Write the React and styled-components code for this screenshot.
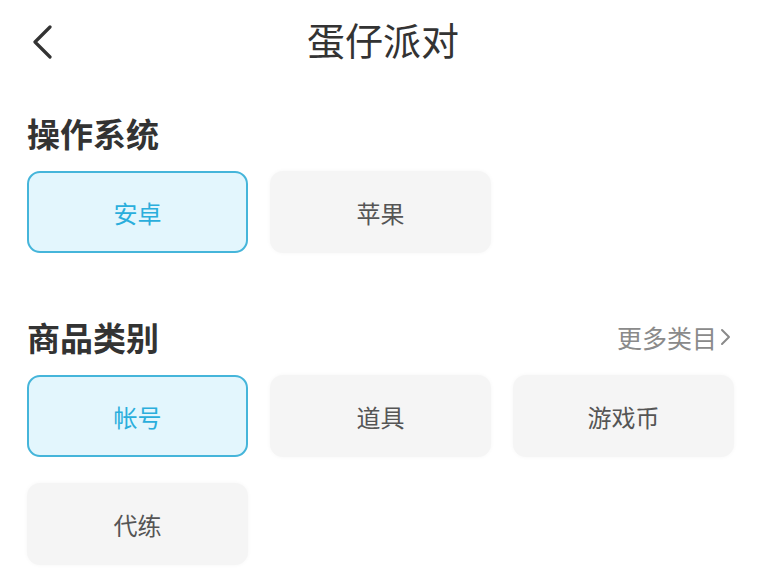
import React, { useState } from "react";
import styled, { createGlobalStyle } from "styled-components";

const Global = createGlobalStyle`
  html, body { margin: 0; padding: 0; background: #fff; }
  body { font-family: "Noto Sans CJK SC", "Noto Sans", sans-serif; }
  * { box-sizing: border-box; }
`;

const Page = styled.div`
  width: 764px;
  min-height: 569px;
  background: #fff;
`;

const Header = styled.header`
  position: relative;
  height: 84px;
  display: flex;
  align-items: center;
  justify-content: center;
`;

const Back = styled.button`
  position: absolute;
  left: 26px;
  top: 22px;
  width: 32px;
  height: 40px;
  padding: 0;
  border: none;
  background: none;
  display: flex;
  align-items: center;
  justify-content: center;
`;

const Title = styled.h1`
  margin: 0;
  font-size: 38px;
  font-weight: 400;
  color: #333;
  line-height: 1;
  transform: translate(1px, -3px);
`;

const Section = styled.section`
  padding: 0 27px;
`;

const SectionHead = styled.div`
  display: flex;
  align-items: center;
  justify-content: space-between;
  height: 42px;
  margin-top: ${(p) => p.$top}px;
  margin-bottom: 17px;
`;

const SectionTitle = styled.h2`
  margin: 0;
  font-size: 33px;
  font-weight: 700;
  color: #333;
  line-height: 42px;
`;

const More = styled.a`
  display: flex;
  align-items: center;
  gap: 3px;
  font-size: 25px;
  color: #8a8a8a;
  text-decoration: none;
  margin-right: 6px;
`;

const Grid = styled.div`
  display: grid;
  grid-template-columns: repeat(3, 221px);
  column-gap: 22px;
  row-gap: 26px;
`;

const Option = styled.button`
  height: 82px;
  border-radius: 13px;
  font-family: inherit;
  font-size: 24px;
  display: flex;
  align-items: center;
  justify-content: center;
  cursor: pointer;
  border: 2px solid ${(p) => (p.$active ? "#45b5da" : "transparent")};
  background: ${(p) => (p.$active ? "#e3f6fd" : "#f5f5f5")};
  color: ${(p) => (p.$active ? "#2aaedc" : "#555")};
  box-shadow: ${(p) => (p.$active ? "none" : "0 0 4px rgba(0,0,0,0.04)")};
`;

function OptionGroup({ items }) {
  const [sel, setSel] = useState(0);
  return (
    <Grid>
      {items.map((t, i) => (
        <Option key={t} $active={i === sel} onClick={() => setSel(i)}>
          {t}
        </Option>
      ))}
    </Grid>
  );
}

export default function App() {
  return (
    <Page>
      <Global />
      <Header>
        <Back aria-label="返回">
          <svg width="22" height="34" viewBox="0 0 22 34">
            <polyline points="19,2 4,17 19,32" fill="none" stroke="#333" strokeWidth="3.2" strokeLinecap="round" strokeLinejoin="round" />
          </svg>
        </Back>
        <Title>蛋仔派对</Title>
      </Header>
      <Section>
        <SectionHead $top={28}>
          <SectionTitle>操作系统</SectionTitle>
        </SectionHead>
        <OptionGroup items={["安卓", "苹果"]} />
      </Section>
      <Section>
        <SectionHead $top={63}>
          <SectionTitle>商品类别</SectionTitle>
          <More href="#">
            更多类目
            <svg width="11" height="20" viewBox="0 0 11 20">
              <polyline points="2,3 9,10 2,17" fill="none" stroke="#8a8a8a" strokeWidth="2" strokeLinecap="round" strokeLinejoin="round" />
            </svg>
          </More>
        </SectionHead>
        <OptionGroup items={["帐号", "道具", "游戏币", "代练"]} />
      </Section>
    </Page>
  );
}
